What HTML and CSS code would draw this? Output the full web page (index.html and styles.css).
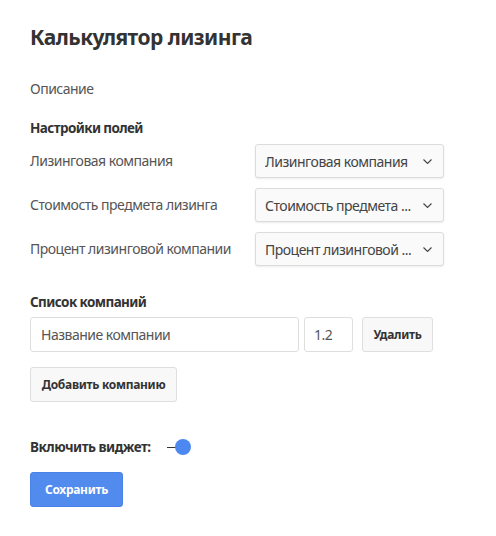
FILE: index.html
```html
<!DOCTYPE html>
<html lang="ru">
<head>
<meta charset="utf-8">
<link rel="stylesheet" href="styles.css">
</head>
<body>
<div class="page">
  <h1 class="title">Калькулятор лизинга</h1>
  <p class="desc">Описание</p>
  <h2 class="section">Настройки полей</h2>
  <div class="fields">
    <div class="label">Лизинговая компания</div>
    <div class="select"><span class="select-text">Лизинговая компания</span><svg class="chev" width="9" height="5" viewBox="0 0 9 5"><polyline points="0.5,0.5 4.5,4.5 8.5,0.5" fill="none" stroke="#444" stroke-width="1.1"/></svg></div>
    <div class="label">Стоимость предмета лизинга</div>
    <div class="select"><span class="select-text">Стоимость предмета ...</span><svg class="chev" width="9" height="5" viewBox="0 0 9 5"><polyline points="0.5,0.5 4.5,4.5 8.5,0.5" fill="none" stroke="#444" stroke-width="1.1"/></svg></div>
    <div class="label">Процент лизинговой компании</div>
    <div class="select"><span class="select-text">Процент лизинговой ...</span><svg class="chev" width="9" height="5" viewBox="0 0 9 5"><polyline points="0.5,0.5 4.5,4.5 8.5,0.5" fill="none" stroke="#444" stroke-width="1.1"/></svg></div>
  </div>
  <h2 class="section list-title">Список компаний</h2>
  <div class="company-row">
    <input class="input name" type="text" value="Название компании">
    <input class="input rate" type="text" value="1.2">
    <button class="btn del">Удалить</button>
  </div>
  <button class="btn add">Добавить компанию</button>
  <div class="toggle-row">
    <span class="toggle-label">Включить виджет:</span>
    <span class="toggle"><span class="track"></span><span class="knob"></span></span>
  </div>
  <button class="btn save">Сохранить</button>
</div>
</body>
</html>
```
FILE: styles.css
```css
* { box-sizing: border-box; }
body {
  margin: 0;
  background: #fff;
  font-family: "Noto Sans", "Open Sans", sans-serif;
  color: #555;
}
.page {
  padding: 22px 30px 0 30px;
}
.title {
  margin: 0;
  font-size: 21px;
  letter-spacing: -0.55px;
  line-height: 30px;
  font-weight: 700;
  color: #333;
}
.desc {
  margin: 27px 0 0;
  font-size: 14px;
  letter-spacing: -0.5px;
  line-height: 20px;
}
.section {
  margin: 19px 0 0;
  font-size: 13.5px;
  letter-spacing: -0.6px;
  line-height: 20px;
  font-weight: 700;
  color: #333;
}
.fields {
  margin-top: 6px;
  display: grid;
  grid-template-columns: 225px 189px;
  row-gap: 10px;
  align-items: center;
}
.label {
  font-size: 14px;
  letter-spacing: -0.5px;
  line-height: 20px;
}
.select {
  height: 34px;
  border: 1px solid #dcdcdc;
  border-radius: 3px;
  background: #fafafa;
  box-shadow: 0 1px 2px rgba(0,0,0,0.08);
  display: flex;
  align-items: center;
  justify-content: space-between;
  padding: 0 11px 0 9px;
  font-size: 14px;
  letter-spacing: -0.5px;
  color: #444;
}
.select-text {
  white-space: nowrap;
  overflow: hidden;
}
.chev { flex: none; }
.list-title {
  margin-top: 26px;
}
.company-row {
  margin-top: 5px;
  display: flex;
  align-items: center;
}
.input {
  height: 35px;
  border: 1px solid #dedede;
  border-radius: 3px;
  background: #fff;
  font-family: inherit;
  font-size: 14px;
  letter-spacing: -0.5px;
  color: #555;
  outline: none;
}
.name {
  width: 269px;
  padding: 0 10px;
}
.rate {
  width: 49px;
  margin-left: 5px;
  padding: 0 9px;
}
.btn {
  height: 35px;
  border: 1px solid #dedede;
  border-radius: 3px;
  background: #f8f8f8;
  font-family: inherit;
  font-size: 12px;
  letter-spacing: -0.3px;
  font-weight: 700;
  color: #333;
  padding: 0 10px;
  cursor: pointer;
}
.del {
  width: 71px;
  margin-left: 9px;
  padding: 0;
}
.add {
  display: block;
  margin-top: 15px;
  width: 147px;
  padding: 0;
}
.toggle-row {
  margin-top: 35px;
  display: flex;
  align-items: center;
  height: 20px;
}
.toggle-label {
  font-size: 13.5px;
  letter-spacing: -0.5px;
  font-weight: 700;
  color: #333;
}
.toggle {
  position: relative;
  display: inline-block;
  width: 25px;
  height: 16px;
  margin-left: 16px;
}
.track {
  position: absolute;
  left: 0;
  top: 7.5px;
  width: 12px;
  height: 1px;
  background: #333;
}
.knob {
  position: absolute;
  left: 8px;
  top: 0;
  width: 16px;
  height: 16px;
  border-radius: 50%;
  background: #4d88f0;
}
.save {
  display: block;
  margin-top: 15px;
  width: 93px;
  background: #518bee;
  border-color: #4a82e6;
  color: #fff;
  padding: 0;
}
```
